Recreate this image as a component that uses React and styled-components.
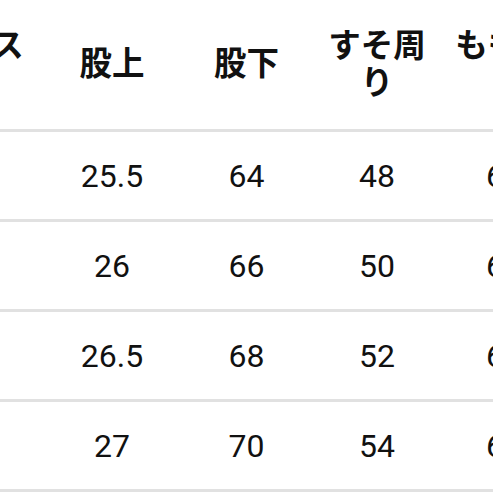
import React from 'react';
import styled, { createGlobalStyle } from 'styled-components'

const GlobalStyle = createGlobalStyle`
  html, body {
    margin: 0;
    padding: 0;
    background: #ffffff;
  }
`

const Viewport = styled.div`
  width: 493px;
  height: 493px;
  overflow: hidden;
  background: #ffffff;
`

// the table is wider than the screenshot, the crop shows part of it
const SizeTable = styled.div`
  display: grid;
  grid-template-columns: 138px 136px 133px 128px 126px 130px;
  margin-left: -94px;
  margin-top: -8px;
  width: max-content;
  color: #111111;
`

const HeadCell = styled.div`
  height: 137px;
  display: flex;
  align-items: center;
  justify-content: center;
  text-align: center;
  padding: 0 8px;
  font-family: "Noto Sans CJK JP", "Noto Sans", sans-serif;
  font-weight: 700;
  font-size: 32.5px;
  line-height: 37px;
  border-bottom: 3px solid #e1e1e1;
`

const Cell = styled.div`
  height: 87px;
  display: flex;
  align-items: center;
  justify-content: center;
  font-family: Roboto, "Noto Sans", sans-serif;
  font-size: 32px;
  border-bottom: 3px solid #e1e1e1;
`

const headers = ['ウエスト', '股上', '股下', 'すそ周り', 'もも周り', '総丈']

const rows = [
  ['72', '25.5', '64', '48', '60', '90'],
  ['76', '26', '66', '50', '62', '92'],
  ['80', '26.5', '68', '52', '64', '94'],
  ['84', '27', '70', '54', '66', '96'],
]

export default function App() {
  return (
    <Viewport>
      <GlobalStyle />
      <SizeTable>
        {headers.map((h, i) => (
          <HeadCell key={'h' + i}>{h}</HeadCell>
        ))}
        {rows.map((row, r) =>
          row.map((v, c) => <Cell key={r + '-' + c}>{v}</Cell>)
        )}
      </SizeTable>
    </Viewport>
  )
}
